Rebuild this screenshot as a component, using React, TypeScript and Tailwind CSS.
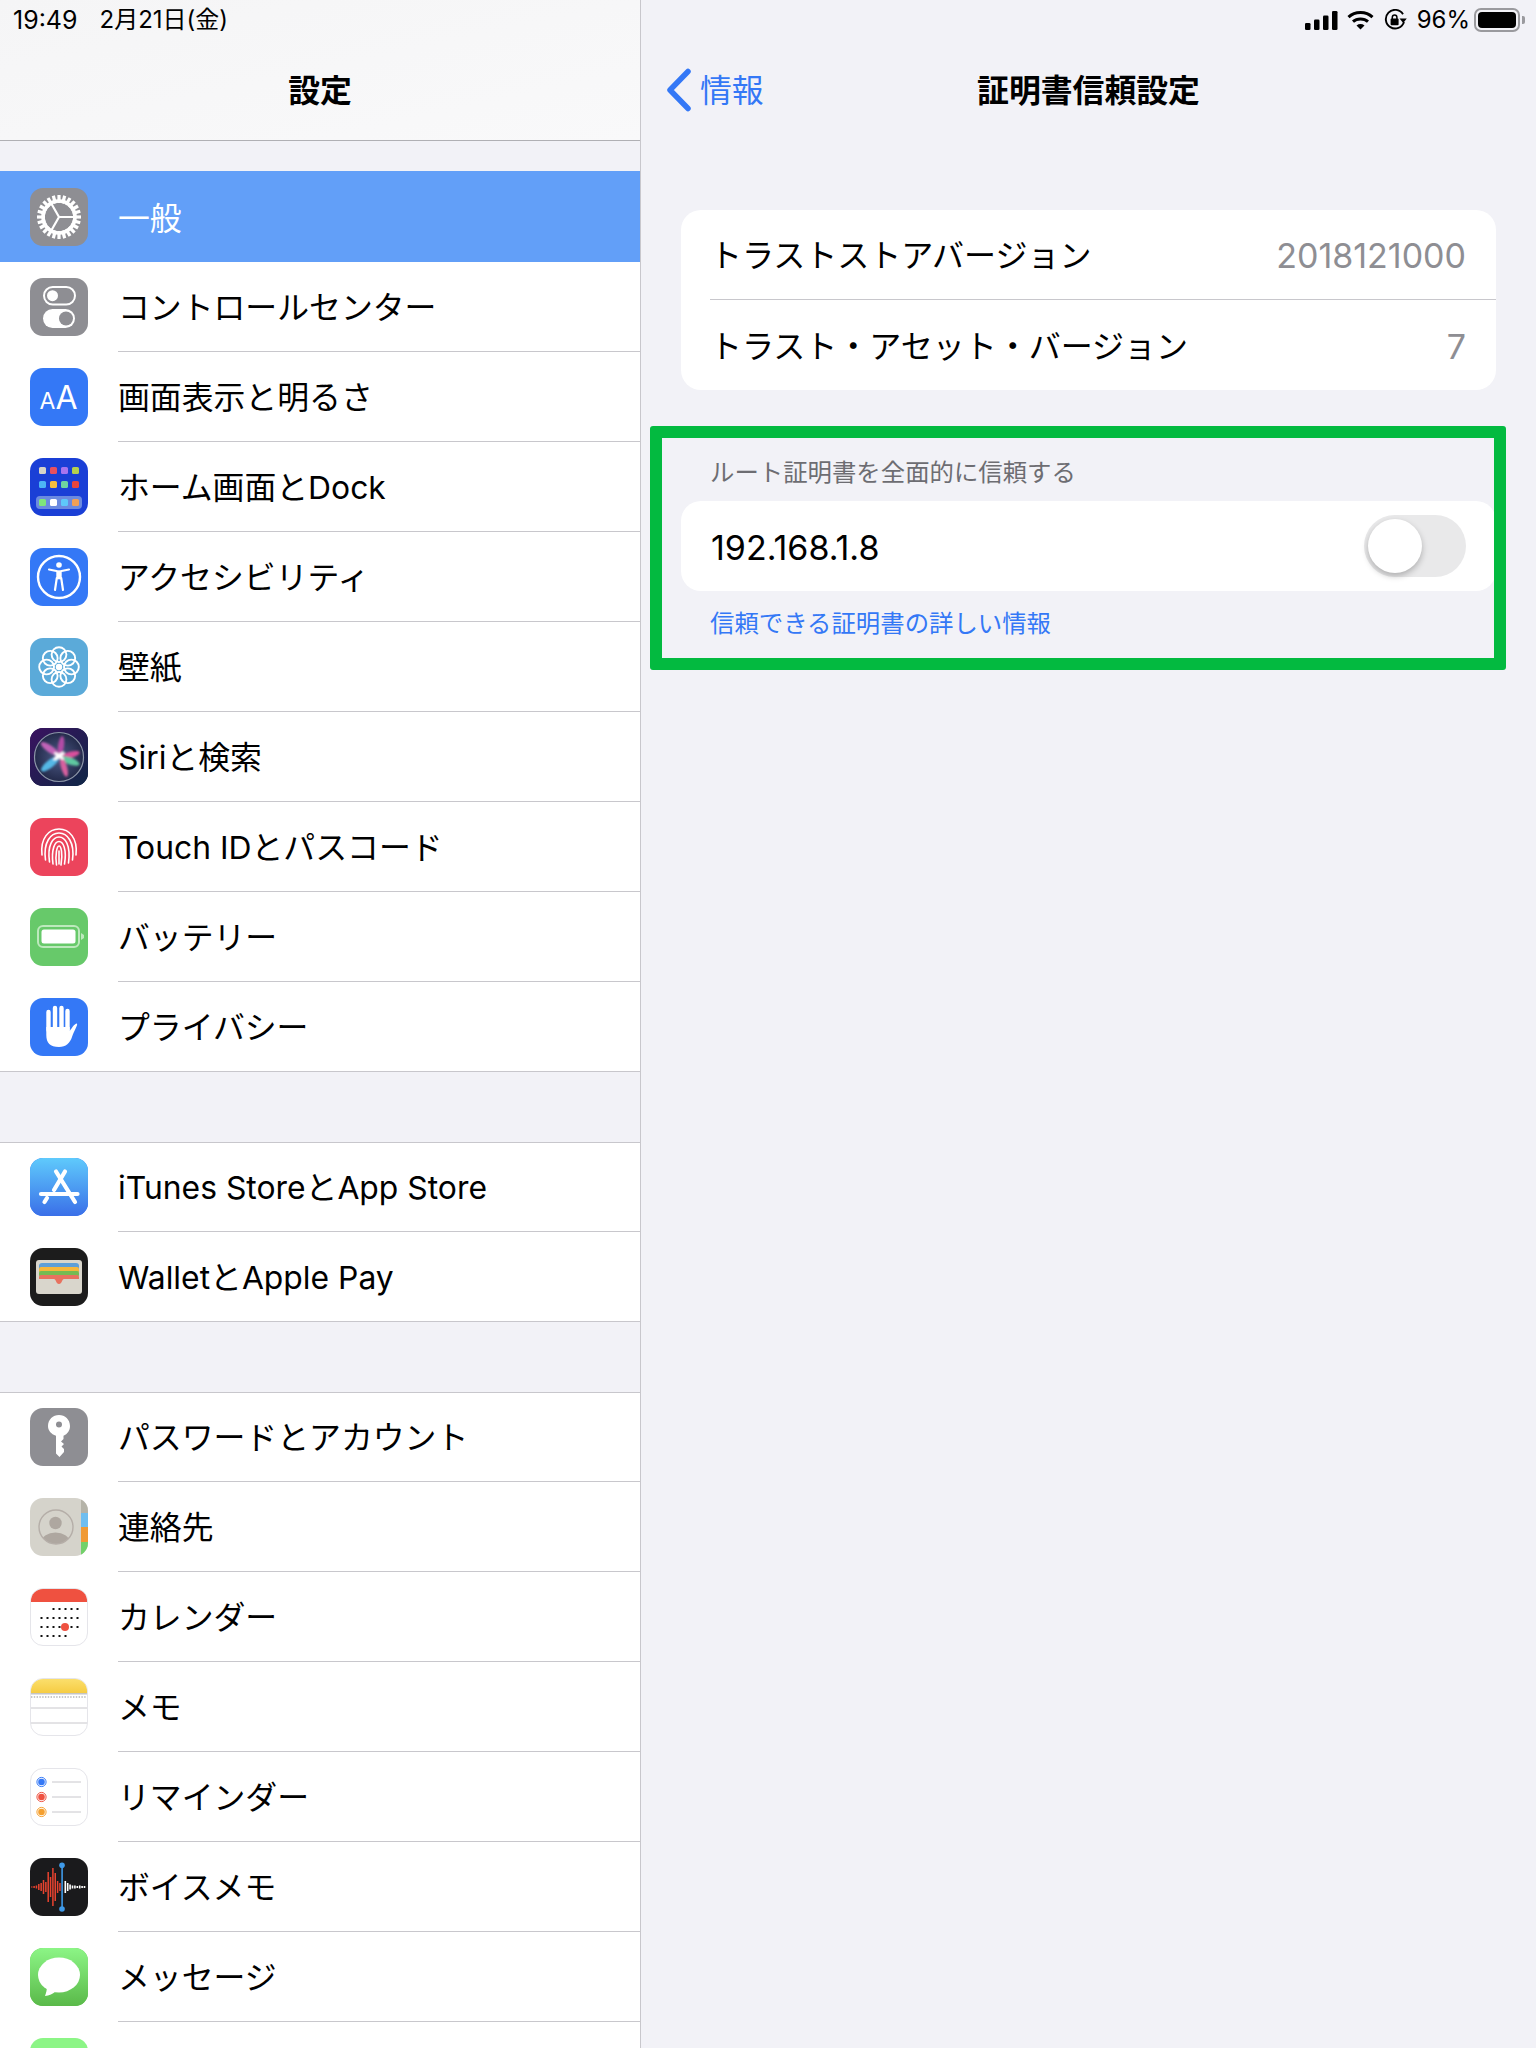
import type { ReactNode } from 'react';

const FONT = 'font-[Inter,"Noto_Sans_CJK_JP",sans-serif]';

function Tile({ className, children }: { className: string; children: ReactNode }) {
  return (
    <div className={`w-[58px] h-[58px] shrink-0 rounded-[13px] overflow-hidden ${className}`}>
      <svg viewBox="0 0 58 58" width="58" height="58" className="block">
        {children}
      </svg>
    </div>
  );
}

/* App icons */
const GearIcon = () => (
  <Tile className="bg-[#8e8e93]">
    {Array.from({ length: 24 }).map((_, i) => (
      <rect key={i} x="27.4" y="7" width="3.2" height="8" fill="#fff" transform={`rotate(${i * 15} 29 29)`} />
    ))}
    <circle cx="29" cy="29" r="16" fill="none" stroke="#fff" strokeWidth="3.6" />
    <path d="M29 29 L21 15 M29 29 H45 M29 29 L21 43" stroke="#fff" strokeWidth="2.2" />
  </Tile>
);

const ControlIcon = () => (
  <Tile className="bg-[#8e8e93]">
    <rect x="14" y="9" width="31" height="17.5" rx="8.75" fill="none" stroke="#fff" strokeWidth="2" />
    <circle cx="22.5" cy="17.7" r="5.5" fill="#fff" />
    <rect x="13" y="31" width="32" height="19" rx="9.5" fill="#fff" />
    <circle cx="36" cy="40.5" r="7" fill="#8e8e93" />
  </Tile>
);

const DisplayIcon = () => (
  <Tile className="bg-[#3478f6]">
    <text x="9.5" y="41" fill="#fff" fontSize="23" fontFamily="Inter, sans-serif" fontWeight="400">A</text>
    <text x="25.5" y="41" fill="#fff" fontSize="32" fontFamily="Inter, sans-serif" fontWeight="400">A</text>
  </Tile>
);

const HomeIcon = () => {
  const xs = [9, 20, 31, 42];
  const rows = [
    { y: 9, c: ['#d6d4c8', '#e8505f', '#a874ee', '#b5d04e'] },
    { y: 23, c: ['#4db5f5', '#f6bd3c', '#6ed3a0', '#e8453c'] },
    { y: 41, c: ['#7fe67a', '#ffffff', '#5ec8fa', '#f2a055'] },
  ];
  return (
    <Tile className="bg-[#1a3fd6]">
      <rect x="6" y="38" width="46" height="13" rx="4" fill="#6b8ae0" />
      {rows.map((r) =>
        xs.map((x, i) => <rect key={`${r.y}-${x}`} x={x} y={r.y} width="7" height="7" rx="1.6" fill={r.c[i]} />),
      )}
    </Tile>
  );
};

const AccessibilityIcon = () => (
  <Tile className="bg-[#3478f6]">
    <circle cx="29" cy="29" r="21" fill="none" stroke="#fff" strokeWidth="2.4" />
    <circle cx="29" cy="17" r="2.8" fill="#fff" />
    <path d="M19 21.5 L26.5 23 M39 21.5 L31.5 23 M26.8 30 L25 42 M31.2 30 L33 42" fill="none" stroke="#fff" strokeWidth="2.2" strokeLinecap="round" />
    <rect x="26.3" y="22.3" width="5.4" height="9" fill="#fff" />
  </Tile>
);

const WallpaperIcon = () => (
  <Tile className="bg-[#5baad9]">
    {Array.from({ length: 8 }).map((_, i) => (
      <circle key={i} cx="29" cy="16.6" r="7.4" fill="none" stroke="#fff" strokeWidth="1.9" transform={`rotate(${i * 45} 29 29)`} />
    ))}
    <circle cx="29" cy="29" r="3.2" fill="#fff" />
  </Tile>
);

const SiriIcon = () => (
  <Tile className="bg-[#1a1b45]">
    <defs>
      <linearGradient id="siriBg" x1="0" y1="0" x2="1" y2="1">
        <stop offset="0" stopColor="#3a1260" />
        <stop offset="1" stopColor="#0f2746" />
      </linearGradient>
      <radialGradient id="siriDisc">
        <stop offset="0" stopColor="#4c5a86" />
        <stop offset="1" stopColor="#232a4a" />
      </radialGradient>
      <filter id="siriBlur">
        <feGaussianBlur stdDeviation="1.1" />
      </filter>
    </defs>
    <rect width="58" height="58" fill="url(#siriBg)" />
    <circle cx="29" cy="29" r="24.5" fill="url(#siriDisc)" stroke="#8c96a8" strokeWidth="1.2" />
    <g filter="url(#siriBlur)">
      <ellipse cx="20" cy="21" rx="11" ry="3.5" fill="#c264b8" transform="rotate(35 20 21)" />
      <ellipse cx="31" cy="18" rx="3" ry="10" fill="#b24ca6" transform="rotate(8 31 18)" />
      <ellipse cx="40" cy="27" rx="10" ry="3" fill="#d94f9c" transform="rotate(-15 40 27)" />
      <ellipse cx="40" cy="33" rx="10" ry="3.4" fill="#5fc8a0" transform="rotate(20 40 33)" />
      <ellipse cx="20" cy="36" rx="11" ry="3.8" fill="#54b8e6" transform="rotate(-38 20 36)" />
      <ellipse cx="34" cy="39" rx="3" ry="10" fill="#d8609f" transform="rotate(-16 34 39)" />
      <ellipse cx="29" cy="28" rx="7" ry="2" fill="#ffffff" transform="rotate(-35 29 28)" />
      <ellipse cx="29" cy="28" rx="6" ry="1.8" fill="#ffffff" transform="rotate(35 29 28)" />
    </g>
  </Tile>
);

const TouchIdIcon = () => (
  <Tile className="bg-[#ec445c]">
    <g fill="none" stroke="#fff" strokeWidth="1.6" strokeLinecap="round">
      <path d="M12 37 C10 20 19 11 29 11 C39 11 48 20 46 37" />
      <path d="M15.5 42 C13 24 21 15 29 15 C37 15 45 24 42.5 42" />
      <path d="M19.5 44 C17 27 23 19 29 19 C35 19 41 27 38.5 45" />
      <path d="M23 46 C21 31 25 23.5 29 23.5 C33 23.5 37 31 34.5 46" />
      <path d="M26.5 47 C25 36 27 28 29 28 C31 28 33 35 31 47" />
      <path d="M29 33 V46" />
    </g>
  </Tile>
);

const BatteryIcon = () => (
  <Tile className="bg-[#67c96a]">
    <rect x="8" y="18" width="41" height="21" rx="5" fill="none" stroke="#bde9bd" strokeWidth="2" />
    <rect x="11.5" y="21.5" width="34" height="14" rx="2.5" fill="#fff" />
    <path d="M51 25 L54 27 V30 L51 32 Z" fill="#bde9bd" />
  </Tile>
);

const HandIcon = () => (
  <Tile className="bg-[#3478f6]">
    <g stroke="#fff" strokeWidth="4.4" strokeLinecap="round">
      <path d="M18.5 14 V32 M25 10 V30 M31.5 10 V30 M37.5 13 V32" />
    </g>
    <path d="M16.3 29 H39.7 V33 C42 30 44 26 47 25.5 C48 27 44 33 42 39 C40 45 36 49 29 49 C20 49 16.3 45 16.3 37 Z" fill="#fff" />
  </Tile>
);

const AppStoreIcon = () => (
  <Tile className="bg-[#3478f6]">
    <defs>
      <linearGradient id="asBg" x1="0" y1="0" x2="0" y2="1">
        <stop offset="0" stopColor="#5fcafc" />
        <stop offset="1" stopColor="#3a6fe8" />
      </linearGradient>
    </defs>
    <rect width="58" height="58" fill="url(#asBg)" />
    <g stroke="#fff" strokeWidth="4.2" strokeLinecap="round" fill="none">
      <path d="M26 13.5 L45 44" />
      <path d="M35 13.5 L24 32" />
      <path d="M17 40 L14.5 44" />
      <path d="M11 36 H47.5" />
    </g>
  </Tile>
);

const WalletIcon = () => (
  <Tile className="bg-[#1c1c1c]">
    <rect x="6" y="12" width="46" height="34" rx="3" fill="#d9d6cc" />
    <path d="M9 18 a3 3 0 0 1 3 -3 H46 a3 3 0 0 1 3 3 V24 H9 Z" fill="#5d9fd8" />
    <rect x="9" y="19" width="40" height="6" rx="2" fill="#f6b73c" />
    <rect x="9" y="23" width="40" height="6" rx="2" fill="#76bb52" />
    <path d="M9 29 a2 2 0 0 1 2 -2 H47 a2 2 0 0 1 2 2 V31 H34 C32 31 32 36 29 36 C26 36 26 31 24 31 H9 Z" fill="#e8725f" />
  </Tile>
);

const KeyIcon = () => (
  <Tile className="bg-[#8e8e93]">
    <path fillRule="evenodd" fill="#fff" d="M29 7 C35 7 40 11.5 40 18 C40 22.5 37.5 26 33.5 27.8 V31 L31 33.5 L34 36 L31.5 38.5 L34 41 V44 L29.5 49 L26 45.5 V27.8 C21 26 18 22.5 18 18 C18 11.5 23 7 29 7 Z M29 13.5 A3 3 0 1 0 29 19.5 A3 3 0 1 0 29 13.5 Z" />
  </Tile>
);

const ContactsIcon = () => (
  <Tile className="bg-[#d5d3cb]">
    <rect x="51" y="0" width="7" height="15" fill="#b5b3a8" />
    <rect x="51" y="15" width="7" height="14" fill="#6fbef0" />
    <rect x="51" y="29" width="7" height="15" fill="#f09a35" />
    <rect x="51" y="44" width="7" height="14" fill="#72d16a" />
    <clipPath id="contactClip">
      <circle cx="26" cy="29" r="17" />
    </clipPath>
    <g clipPath="url(#contactClip)">
      <circle cx="25.5" cy="25" r="6.2" fill="#aea7a0" />
      <ellipse cx="25.5" cy="44" rx="14" ry="9.5" fill="#aea7a0" />
    </g>
    <circle cx="26" cy="29" r="17" fill="none" stroke="#b5aea8" strokeWidth="1.4" />
  </Tile>
);

const CalendarIcon = () => {
  const xs = [11, 17, 23, 29, 35, 41, 47];
  const rows = [
    { y: 21, from: 2, to: 6 },
    { y: 30, from: 0, to: 6 },
    { y: 39, from: 0, to: 6 },
    { y: 48, from: 0, to: 4 },
  ];
  return (
    <Tile className="bg-white border border-[#e5e5ea]">
      <rect x="-1" y="-1" width="60" height="14" fill="#ef5140" />
      {rows.map((r) =>
        xs.slice(r.from, r.to + 1).map((x) => <rect key={`${r.y}-${x}`} x={x - 1.5} y={r.y - 2} width="2" height="2" fill="#111" />),
      )}
      <circle cx="34" cy="38" r="4" fill="#ef5140" />
    </Tile>
  );
};

const NotesIcon = () => (
  <Tile className="bg-white border border-[#e5e5ea]">
    <defs>
      <linearGradient id="noteTop" x1="0" y1="0" x2="0" y2="1">
        <stop offset="0" stopColor="#fbe06f" />
        <stop offset="1" stopColor="#f6cc43" />
      </linearGradient>
    </defs>
    <rect x="-1" y="-1" width="60" height="15" fill="url(#noteTop)" />
    <rect x="-1" y="14" width="60" height="1.5" fill="#c4c4c4" />
    <path d="M0 18 H58" stroke="#c8c8c8" strokeWidth="2" strokeDasharray="1.4 1.4" />
    <path d="M-1 29 H59 M-1 44 H59" stroke="#c8c7cc" strokeWidth="1" />
  </Tile>
);

const RemindersIcon = () => (
  <Tile className="bg-white border border-[#e5e5ea]">
    {[
      { y: 13, c: '#3478f6' },
      { y: 28, c: '#ef5140' },
      { y: 43, c: '#f59f2e' },
    ].map((r) => (
      <g key={r.y}>
        <circle cx="10.5" cy={r.y} r="4.6" fill="none" stroke={r.c} strokeWidth="1" />
        <circle cx="10.5" cy={r.y} r="3.3" fill={r.c} />
        <path d={`M21 ${r.y} H50`} stroke="#c8c7cc" strokeWidth="1" />
      </g>
    ))}
  </Tile>
);

const VoiceMemoIcon = () => {
  const red = [1, 2, 3, 6, 8, 14, 10, 30, 20, 38, 28, 12, 8].map((h, i) => ({ x: 1 + i * 2.35, h }));
  const white = [12, 8, 5, 3, 3, 2, 3, 2, 2].map((h, i) => ({ x: 34.5 + i * 2.4, h }));
  return (
    <Tile className="bg-[#1a1a1c]">
      {red.map((b) => (
        <rect key={b.x} x={b.x} y={29 - b.h / 2} width="1.5" height={b.h} fill="#e8432f" />
      ))}
      {white.map((b) => (
        <rect key={b.x} x={b.x} y={29 - b.h / 2} width="1.6" height={b.h} fill="#fff" />
      ))}
      <rect x="31.3" y="7" width="1.6" height="44" fill="#3f9ae8" />
      <circle cx="32" cy="7.2" r="2.8" fill="#3f9ae8" />
      <circle cx="32" cy="51" r="2.8" fill="#3f9ae8" />
    </Tile>
  );
};

const MessagesIcon = () => (
  <Tile className="bg-[#67c95a]">
    <defs>
      <linearGradient id="msgBg" x1="0" y1="0" x2="0" y2="1">
        <stop offset="0" stopColor="#8cf586" />
        <stop offset="1" stopColor="#5ab949" />
      </linearGradient>
    </defs>
    <rect width="58" height="58" fill="url(#msgBg)" />
    <ellipse cx="29" cy="27" rx="21" ry="17.5" fill="#fff" />
    <path d="M17 38 C17 42 16 45 15 48 C19 47.5 23 46 26 43 Z" fill="#fff" />
  </Tile>
);

const FaceTimeIcon = () => <Tile className="bg-[#8cf586]">{null}</Tile>;

type Item = { label: string; icon: ReactNode };

const groups: Item[][] = [
  [
    { label: '一般', icon: <GearIcon /> },
    { label: 'コントロールセンター', icon: <ControlIcon /> },
    { label: '画面表示と明るさ', icon: <DisplayIcon /> },
    { label: 'ホーム画面とDock', icon: <HomeIcon /> },
    { label: 'アクセシビリティ', icon: <AccessibilityIcon /> },
    { label: '壁紙', icon: <WallpaperIcon /> },
    { label: 'Siriと検索', icon: <SiriIcon /> },
    { label: 'Touch IDとパスコード', icon: <TouchIdIcon /> },
    { label: 'バッテリー', icon: <BatteryIcon /> },
    { label: 'プライバシー', icon: <HandIcon /> },
  ],
  [
    { label: 'iTunes StoreとApp Store', icon: <AppStoreIcon /> },
    { label: 'WalletとApple Pay', icon: <WalletIcon /> },
  ],
  [
    { label: 'パスワードとアカウント', icon: <KeyIcon /> },
    { label: '連絡先', icon: <ContactsIcon /> },
    { label: 'カレンダー', icon: <CalendarIcon /> },
    { label: 'メモ', icon: <NotesIcon /> },
    { label: 'リマインダー', icon: <RemindersIcon /> },
    { label: 'ボイスメモ', icon: <VoiceMemoIcon /> },
    { label: 'メッセージ', icon: <MessagesIcon /> },
    { label: '', icon: <FaceTimeIcon /> },
  ],
];

function SettingsRow({ item, selected, last }: { item: Item; selected: boolean; last: boolean }) {
  return (
    <div className={`flex items-center pl-[30px] ${selected ? 'h-[91px] pt-[1px] bg-[#629ff8]' : last ? 'h-[90px] border-b border-[#c8c7cc]' : 'h-[90px]'}`}>
      {item.icon}
      <div className={`ml-[30px] flex-1 h-full flex items-center pt-[3px] text-[31.85px] leading-none ${selected ? 'text-white' : 'text-black'} ${!selected && !last ? 'border-b border-[#c8c7cc]' : ''}`}>
        {item.label}
      </div>
    </div>
  );
}

function StatusIcons() {
  return (
    <div className="flex items-center justify-end h-[40px] pr-[11px]">
      <svg width="33" height="19" viewBox="0 0 33 19" className="mr-[9px]">
        <rect x="0" y="12" width="5.5" height="7" rx="1.3" />
        <rect x="9" y="8.5" width="5.5" height="10.5" rx="1.3" />
        <rect x="18" y="4.5" width="5.5" height="14.5" rx="1.3" />
        <rect x="27" y="0" width="5.5" height="19" rx="1.3" />
      </svg>
      <svg width="27" height="20" viewBox="0 0 27 20" className="mr-[10px]" fill="none" stroke="#000" strokeWidth="3">
        <path d="M1.5 7.2 C8 1 19 1 25.5 7.2" />
        <path d="M6 11.6 C10 8 17 8 21 11.6" />
        <path d="M13.5 19.5 L9.5 15.4 C12 13.6 15 13.6 17.5 15.4 Z" fill="#000" stroke="none" />
      </svg>
      <svg width="23" height="22" viewBox="0 0 23 22" className="mr-[10px]">
        <path d="M19 5.2 A9.3 9.3 0 1 0 20 13" fill="none" stroke="#000" strokeWidth="1.9" />
        <path d="M15.5 9.5 L22.8 9.5 L19.2 14 Z" fill="#000" />
        <rect x="6.6" y="9.6" width="8" height="6.6" rx="1" />
        <path d="M8.3 10 V8.2 A2.3 2.3 0 0 1 12.9 8.2 V10" fill="none" stroke="#000" strokeWidth="1.5" />
      </svg>
      <span className="text-[24px] leading-none text-black mr-[4px]">96%</span>
      <div className="w-[46px] h-[24px] rounded-[7px] border-2 border-[#9a9a9e] p-[2px]">
        <div className="w-full h-full rounded-[4px] bg-black" />
      </div>
      <div className="w-[3px] h-[8px] ml-[2px] rounded-r-[2px] bg-[#9a9a9e]" />
    </div>
  );
}

export default function App() {
  return (
    <div className={`w-[1536px] h-[2048px] overflow-hidden flex bg-[#f2f2f7] ${FONT}`}>
      {/* Master column */}
      <aside className="w-[641px] shrink-0 h-full border-r border-[#c8c7cc]">
        <header className="h-[141px] border-b border-[#b0b0b4] bg-gradient-to-br from-[#f5f5f6] to-[#f9f9fa]">
          <div className="h-[40px] flex items-center pl-[13px] leading-none text-black">
            <span className="text-[25px]">19:49</span>
            <span className="ml-[22px] text-[24px]">2月21日(金)</span>
          </div>
          <div className="h-[100px] flex items-center justify-center pt-[2px] text-[31.85px] leading-none font-bold text-black">設定</div>
        </header>
        <div className="pt-[30px]">
          {groups.map((rows, g) => (
            <div key={g} className={g > 0 ? 'mt-[70px] bg-white shadow-[inset_0_1px_0_#c8c7cc]' : 'bg-white'}>
              {rows.map((item, i) => (
                <SettingsRow key={item.label || 'facetime'} item={item} selected={g === 0 && i === 0} last={i === rows.length - 1} />
              ))}
            </div>
          ))}
        </div>
      </aside>

      {/* Detail column */}
      <main className="flex-1 h-full">
        <StatusIcons />
        <nav className="h-[100px] grid grid-cols-[1fr_auto_1fr] items-center">
          <div className="flex items-center pl-[24px] text-[#3478f6]">
            <svg width="28" height="44" viewBox="0 0 28 44" fill="none" stroke="#3478f6" strokeWidth="5.5" strokeLinecap="round" strokeLinejoin="round">
              <path d="M23 3.5 L5 22 L23 40.5" />
            </svg>
            <span className="ml-[7px] pt-[2px] text-[31.85px] leading-none">情報</span>
          </div>
          <div className="pt-[2px] text-[31.85px] leading-none font-bold text-black">証明書信頼設定</div>
          <div />
        </nav>

        <div className="mt-[70px] ml-[40px] mr-[40px]">
          <div className="bg-white rounded-[20px]">
            <div className="h-[90px] flex items-center justify-between pr-[30px] ml-[29px] border-b border-[#c8c7cc] text-[32px] leading-none">
              <span className="pt-[3px] text-black">トラストストアバージョン</span>
              <span className="pt-[3px] text-[34px] leading-none text-[#8e8e93]">2018121000</span>
            </div>
            <div className="h-[90px] flex items-center justify-between pr-[30px] ml-[29px] text-[32px] leading-none">
              <span className="pt-[3px] text-black">トラスト・アセット・バージョン</span>
              <span className="pt-[3px] text-[34px] leading-none text-[#8e8e93]">7</span>
            </div>
          </div>

          <section className="relative">
            <div className="pt-[66px] pl-[29px] h-[111px] text-[24.4px] leading-[32px] text-[#6d6d72]">
              ルート証明書を全面的に信頼する
            </div>
            <div className="h-[90px] bg-white rounded-[20px] flex items-center justify-between pl-[30px] pr-[30px] text-[34px] leading-none text-black">
              <span className="pt-[3px]">192.168.1.8</span>
              <div className="w-[102px] h-[62px] rounded-full bg-[#e9e9ea] p-[4px]">
                <div className="w-[54px] h-[54px] rounded-full bg-white shadow-[0_3px_6px_rgba(0,0,0,0.25)]" />
              </div>
            </div>
            <div className="pt-[16px] pl-[29px] text-[24.4px] leading-[32px] text-[#3478f6]">信頼できる証明書の詳しい情報</div>
            {/* Annotation drawn over the section */}
            <div className="absolute -left-[31px] top-[36px] w-[856px] h-[244px] border-[12px] border-[#03ba40] rounded-[3px]" />
          </section>
        </div>
      </main>
    </div>
  );
}
